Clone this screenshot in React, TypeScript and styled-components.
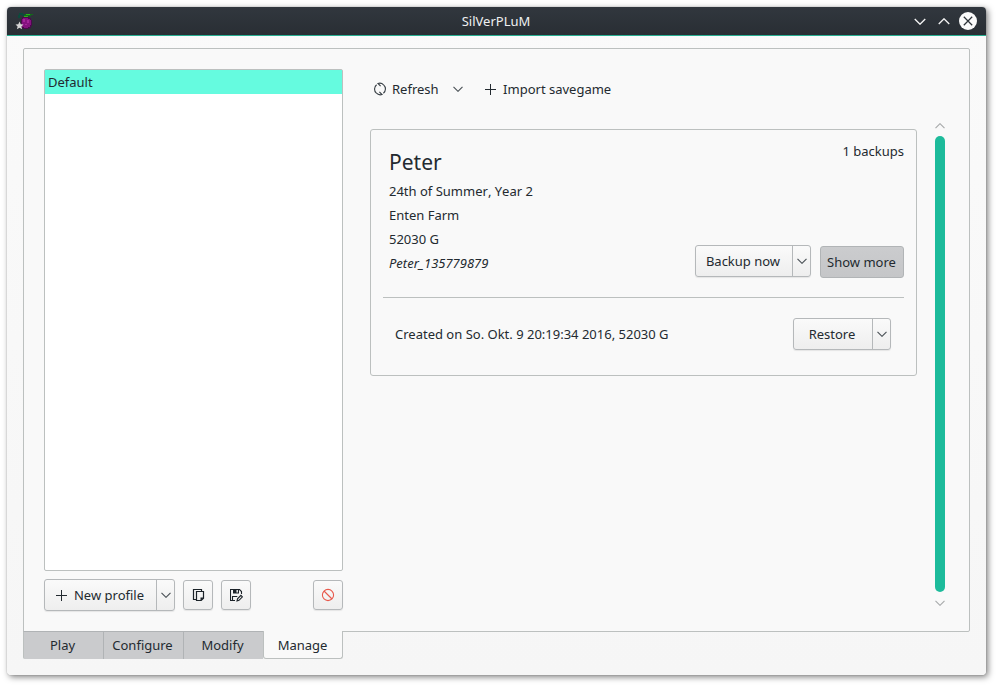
import React from 'react';
import styled, { createGlobalStyle, css } from 'styled-components';

const Global = createGlobalStyle`
  * { box-sizing: border-box; }
  html, body { margin: 0; background: #fff; overflow: hidden; }
  body {
    font-family: "Noto Sans", "Liberation Sans", sans-serif;
    font-size: 13px;
    line-height: 18px;
    color: #232a30;
  }
  button { font: inherit; color: inherit; margin: 0; padding: 0; border: 0; background: none; }
  svg { display: block; flex: none; }
`;

const Desktop = styled.div`
  width: 999px;
  height: 688px;
  padding: 7px 13px 13px 7px;
`;

const Window = styled.main`
  width: 979px;
  height: 668px;
  display: flex;
  flex-direction: column;
  border-radius: 4px;
  background: linear-gradient(#fafafa, #f6f6f6);
  box-shadow: 0 0 1px rgba(0, 0, 0, 0.45), 2px 2px 6px rgba(0, 0, 0, 0.5);
`;

const TitleBar = styled.header`
  flex: none;
  height: 29px;
  display: grid;
  grid-template-columns: 90px 1fr 90px;
  align-items: center;
  padding: 0 9px 0 8px;
  border-bottom: 1px solid #27ae91;
  border-radius: 4px 4px 0 0;
  background: linear-gradient(#31373e, #292e34);
  color: #eff0f1;
`;

const Title = styled.h1`
  margin: 0;
  text-align: center;
  font-size: 13px;
  font-weight: 400;
`;

const Controls = styled.div`
  display: flex;
  justify-content: flex-end;
  align-items: center;
  gap: 12px;
`;

const CloseButton = styled.button`
  margin-left: -3px;
`;

const Body = styled.div`
  flex: 1;
  display: flex;
  flex-direction: column;
  padding: 12px 16px 0;
`;

const Panel = styled.section`
  height: 584px;
  display: flex;
  border: 1px solid #bcc0bf;
  border-radius: 2px;
  border-bottom-left-radius: 0;
  background: #f9f9f9;
  padding: 20px 0 0 20px;
`;

const Sidebar = styled.aside`
  width: 299px;
  display: flex;
  flex-direction: column;
`;

const ProfileList = styled.ul`
  height: 502px;
  margin: 0;
  padding: 0;
  list-style: none;
  background: #fff;
  border: 1px solid #bcc0bf;
  border-radius: 2px;
`;

const ProfileItem = styled.li`
  height: 24px;
  padding: 3px;
  background: #65fbdf;
`;

const ProfileActions = styled.div`
  display: flex;
  align-items: center;
  gap: 8px;
  margin-top: 8px;
`;

const Spacer = styled.div`
  flex: 1;
`;

const raised = css`
  border: 1px solid #b5b8ba;
  border-radius: 3px;
  background: linear-gradient(#fafafa, #eeeeee);
  box-shadow: 0 1px 1px rgba(0, 0, 0, 0.08);
`;

const SplitButton = styled.div<{ $width: number }>`
  ${raised}
  width: ${(p) => p.$width}px;
  height: 32px;
  display: flex;
`;

const SplitMain = styled.button`
  flex: 1;
  display: flex;
  align-items: center;
  justify-content: center;
  gap: 6px;
  padding-right: 2px;
`;

const SplitMenu = styled.button`
  width: 18px;
  display: flex;
  align-items: center;
  justify-content: center;
  border-left: 1px solid #b5b8ba;
`;

const IconButton = styled.button`
  ${raised}
  width: 30px;
  height: 30px;
  display: flex;
  align-items: center;
  justify-content: center;
`;

const ToggleButton = styled.button`
  width: 84px;
  height: 32px;
  margin-top: 1px;
  padding-right: 1px;
  border: 1px solid #b1b4b6;
  border-radius: 3px;
  background: linear-gradient(#cbccce, #c5c6c8);
`;

const Main = styled.div`
  width: 547px;
  margin-left: 27px;
`;

const Toolbar = styled.div`
  height: 60px;
  display: flex;
  align-items: center;
  padding: 0 0 20px 3px;
`;

const ToolButton = styled.button<{ $gap: number; $after?: number }>`
  display: flex;
  align-items: center;
  gap: ${(p) => p.$gap}px;
  margin-right: ${(p) => p.$after ?? 0}px;
`;

const SaveCard = styled.article`
  height: 247px;
  border: 1px solid #bcc0bf;
  border-radius: 3px;
  padding: 12px;
`;

const SaveHead = styled.div`
  height: 156px;
  display: flex;
  justify-content: space-between;
  border-bottom: 1px solid #bcc0bf;
`;

const SaveInfo = styled.div`
  padding: 7px 0 0 6px;
`;

const SaveName = styled.h2`
  margin: 0 0 4px;
  font-size: 21px;
  line-height: 26px;
  font-weight: 400;
`;

const SaveLine = styled.p<{ $italic?: boolean }>`
  margin: 0;
  line-height: 24px;
  font-kerning: ${(p) => (p.$italic ? 'auto' : 'none')};
  font-style: ${(p) => (p.$italic ? 'italic' : 'normal')};
`;

const SaveSide = styled.div`
  display: flex;
  flex-direction: column;
  justify-content: space-between;
  align-items: flex-end;
  padding-bottom: 19px;
`;

const SaveButtons = styled.div`
  display: flex;
  gap: 9px;
`;

const BackupRow = styled.div`
  display: flex;
  align-items: center;
  justify-content: space-between;
  padding: 20px 13px 0 12px;
`;

const ScrollBar = styled.div`
  margin: 54px 0 0 18px;
  width: 10px;
  display: flex;
  flex-direction: column;
  align-items: center;
`;

const ScrollThumb = styled.div`
  width: 10px;
  height: 456px;
  margin: 7px 0 8px;
  border-radius: 5px;
  background: #1dbb9b;
`;

const Tabs = styled.nav`
  display: flex;
  margin-top: -1px;
`;

const Tab = styled.button<{ $active?: boolean }>`
  width: 80px;
  height: 28px;
  padding: 0 2px 1px 0;
  border: 1px solid #b0b3b5;
  border-width: 1px 0 0 1px;
  background: #cacbcd;
  &:first-child { border-left-color: #bcc0bf; border-bottom-left-radius: 2px; }
  ${(p) =>
    p.$active &&
    css`
      padding: 0 1px 0 0;
      border: 1px solid #bcc0bf;
      border-top: 0;
      border-radius: 0 0 3px 3px;
      background: #f9f9f9;
    `}
`;

const Chevron = ({ up = false, color = '#4b5257', width = 10 }: { up?: boolean; color?: string; width?: number }) => (
  <svg width={width} height={width === 10 ? 6 : 7} viewBox="0 0 10 6" fill="none" stroke={color} strokeWidth="1.15">
    <path d={up ? 'M.5 5.2 5 .7l4.5 4.5' : 'M.5.8 5 5.3 9.5.8'} />
  </svg>
);

const Plus = () => (
  <svg width="13" height="13" viewBox="0 0 13 13" stroke="#232a30">
    <path d="M6.5 1v11M1 6.5h11" />
  </svg>
);

const RefreshIcon = () => (
  <svg width="14" height="14" viewBox="0 0 14 14" fill="none" stroke="#353c42" strokeWidth="1.1">
    <path d="M3.6 2.8A5.5 5.5 0 0 0 3.4 11.2M10.4 11.2A5.5 5.5 0 0 0 10.6 2.8" />
    <path d="M10.6 2.8A5.5 5.5 0 0 0 5 1.5L7.6 4.1M3.4 11.2A5.5 5.5 0 0 0 9 12.5L6.4 9.9" />
  </svg>
);

const CopyIcon = () => (
  <svg width="14" height="13" viewBox="-2 0 14 13" fill="none" stroke="#1b2228">
    <path d="M3 10.5H.5V.5h8V2M3.5 2.5h7v6.8L8.2 11.5H3.5z" strokeWidth="1.2" />
    <path d="M11 8.5 7.5 12V8.5z" fill="#1b2228" stroke="none" />
  </svg>
);

const SaveAsIcon = () => (
  <svg width="13" height="13" viewBox="0 0 13 13" fill="none" stroke="#1b2228" strokeWidth="1.1">
    <path d="M5 11.5H.5V.5h9l2 2V5M2.5 11.5V7.5h4.8" />
    <path d="M3 0h6v4.5H3z" fill="#1b2228" stroke="none" />
    <path d="M6.5 1h1.4v2.5H6.5z" fill="#f5f5f5" stroke="none" />
    <path d="m7 12 .5-2.2 3.4-3.4 1.5 1.5-3.4 3.4z" />
  </svg>
);

const ForbidIcon = () => (
  <svg width="14" height="14" viewBox="0 0 14 14" fill="none" stroke="#e8594c" strokeWidth="1.1">
    <circle cx="7" cy="7" r="5.6" />
    <path d="m3 3 8 8" />
  </svg>
);

const CloseIcon = () => (
  <svg width="18" height="18" viewBox="0 0 18 18">
    <circle cx="9" cy="9" r="9" fill="#fafafa" />
    <path d="m4.8 4.8 8.4 8.4m0-8.4-8.4 8.4" stroke="#2d3339" strokeWidth="1.25" />
  </svg>
);

const PlumIcon = () => (
  <svg width="18" height="20" viewBox="0 0 18 20">
    <path d="M7 6h7v1h2v2h1v6h-1v2h-2v1H8v-1H6V8h1z" fill="#4a0a4c" />
    <path d="M8 7h5v1h2v1h1v5h-1v2h-2v1H9v-1H7V8h1z" fill="#84127f" />
    <path d="M8 8h2v3H8zM12 9h2v3h-2zM10 13h2v1h-2z" fill="#a3259a" />
    <path d="M4 2h4v1h2v2H7V4H4zM3 4h2v3H3z" fill="#0c4a3c" />
    <path d="M10 3h8v1h-2v1h-4v1H9V4h1z" fill="#126b19" />
    <path d="M11 3h4v1h-4zM9 5h4v1H9z" fill="#2cae18" />
    <path d="m4.5 10.5 1.2 2.7 2.8.3-2.1 1.9.7 2.9-2.6-1.5-2.6 1.5.7-2.9-2.1-1.9 2.8-.3z" fill="#d5d5d5" />
  </svg>
);

const tabs = ['Play', 'Configure', 'Modify', 'Manage'];
const details = ['24th of Summer, Year 2', 'Enten Farm', '52030 G'];

export default function App() {
  return (
    <>
      <Global />
      <Desktop>
        <Window>
          <TitleBar>
            <PlumIcon />
            <Title>SilVerPLuM</Title>
            <Controls>
              <Chevron width={12} color="#f4f4f4" />
              <Chevron width={12} color="#f4f4f4" up />
              <CloseButton><CloseIcon /></CloseButton>
            </Controls>
          </TitleBar>
          <Body>
            <Panel>
              <Sidebar>
                <ProfileList>
                  <ProfileItem>Default</ProfileItem>
                </ProfileList>
                <ProfileActions>
                  <SplitButton $width={131}>
                    <SplitMain><Plus />New profile</SplitMain>
                    <SplitMenu><Chevron /></SplitMenu>
                  </SplitButton>
                  <IconButton><CopyIcon /></IconButton>
                  <IconButton><SaveAsIcon /></IconButton>
                  <Spacer />
                  <IconButton><ForbidIcon /></IconButton>
                </ProfileActions>
              </Sidebar>
              <Main>
                <Toolbar>
                  <ToolButton $gap={5} $after={14}><RefreshIcon />Refresh</ToolButton>
                  <ToolButton $gap={0} $after={21}><Chevron /></ToolButton>
                  <ToolButton $gap={6.5}><Plus />Import savegame</ToolButton>
                </Toolbar>
                <SaveCard>
                  <SaveHead>
                    <SaveInfo>
                      <SaveName>Peter</SaveName>
                      {details.map((d) => <SaveLine key={d}>{d}</SaveLine>)}
                      <SaveLine $italic>Peter_135779879</SaveLine>
                    </SaveInfo>
                    <SaveSide>
                      <span>1 backups</span>
                      <SaveButtons>
                        <SplitButton $width={116}>
                          <SplitMain>Backup now</SplitMain>
                          <SplitMenu><Chevron /></SplitMenu>
                        </SplitButton>
                        <ToggleButton>Show more</ToggleButton>
                      </SaveButtons>
                    </SaveSide>
                  </SaveHead>
                  <BackupRow>
                    <span>Created on So. Okt. 9 20:19:34 2016, 52030 G</span>
                    <SplitButton $width={98}>
                      <SplitMain>Restore</SplitMain>
                      <SplitMenu><Chevron /></SplitMenu>
                    </SplitButton>
                  </BackupRow>
                </SaveCard>
              </Main>
              <ScrollBar>
                <Chevron up color="#a9abac" />
                <ScrollThumb />
                <Chevron color="#a9abac" />
              </ScrollBar>
            </Panel>
            <Tabs>
              {tabs.map((t) => <Tab key={t} $active={t === 'Manage'}>{t}</Tab>)}
            </Tabs>
          </Body>
        </Window>
      </Desktop>
    </>
  );
}
